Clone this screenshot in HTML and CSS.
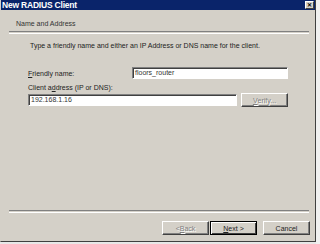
FILE: index.html
```html
<!DOCTYPE html>
<html lang="en">
<head>
    <meta charset="UTF-8">
    <title>New RADIUS Client</title>
    <link rel="stylesheet" href="styles.css">
</head>
<body>
    <div class="window">
        <div class="titlebar">
            <span class="title">New RADIUS Client</span>
            <span class="close">&#x2715;</span>
        </div>
        <div class="header">
            <div class="heading">Name and Address</div>
        </div>
        <div class="rule"></div>
        <div class="content">
            <p class="intro">Type a friendly name and either an IP Address or DNS name for the client.</p>
            <div class="row">
                <label class="label"><u>F</u>riendly name:</label>
                <div class="field name-field">floors_router</div>
            </div>
            <label class="label addr-label">Client a<u>d</u>dress (IP or DNS):</label>
            <div class="row">
                <div class="field addr-field">192.168.1.16</div>
                <div class="btn verify"><u>V</u>erify...</div>
            </div>
        </div>
        <div class="rule"></div>
        <div class="buttons">
            <div class="btn disabled">&lt; <u>B</u>ack</div>
            <div class="btn default"><u>N</u>ext &gt;</div>
            <div class="btn cancel">Cancel</div>
        </div>
    </div>
    <div class="behind"></div>
</body>
</html>
```

FILE: styles.css
```css
body {
    margin: 0;
    width: 320px;
    height: 244px;
    overflow: hidden;
    background: #e8e8e8;
    display: flex;
    font-family: "Liberation Sans", Arial, sans-serif;
    font-size: 7px;
    color: #000;
}
.window {
    width: 314px;
    height: 241px;
    background: #d4d0c8;
    border: 1px solid #404040;
    border-top: none;
    border-left-color: #d4d0c8;
    display: flex;
    flex-direction: column;
}
.behind {
    flex: 1;
    background: #f0f0f0;
}
.titlebar {
    height: 10px;
    background: #0a246a;
    display: flex;
    align-items: center;
    justify-content: space-between;
    padding: 0 1px 0 1px;
}
.title {
    color: #fff;
    font-weight: bold;
    font-size: 8.5px;
    letter-spacing: -0.2px;
}
.close {
    width: 9px;
    height: 8px;
    background: #d4d0c8;
    border: 1px solid;
    border-color: #fff #404040 #404040 #fff;
    box-sizing: border-box;
    font-size: 6px;
    line-height: 6px;
    text-align: center;
    color: #000;
    font-weight: bold;
}
.header {
    height: 21px;
    padding: 0 0 0 15px;
    display: flex;
    align-items: center;
}
.heading {
    color: #333;
    margin-top: 6px;
}
.rule {
    margin: 0 6px 0 8px;
    height: 1px;
    border-top: 1px solid #808080;
    border-bottom: 1px solid #fff;
}
.content {
    flex: 1;
    padding: 8px 27px 0 27px;
    display: flex;
    flex-direction: column;
}
.intro {
    margin: 0 0 18px 2px;
    color: #222;
}
.row {
    display: flex;
    align-items: center;
    justify-content: space-between;
}
.label {
    color: #222;
}
.addr-label {
    margin: 5px 0 2px 0;
}
.field {
    height: 12px;
    background: #fff;
    border: 1px solid;
    border-color: #808080 #fff #fff #808080;
    box-shadow: inset 1px 1px 0 #404040;
    box-sizing: border-box;
    padding: 0 2px;
    line-height: 10px;
    color: #333;
}
.name-field {
    width: 156px;
}
.addr-field {
    width: 209px;
}
.btn {
    height: 14px;
    background: #d4d0c8;
    border: 1px solid;
    border-color: #fff #404040 #404040 #fff;
    box-shadow: inset -1px -1px 0 #808080;
    box-sizing: border-box;
    display: flex;
    align-items: center;
    justify-content: center;
    color: #222;
}
.verify {
    width: 47px;
    color: #808080;
    text-shadow: 1px 1px 0 #fff;
}
.buttons {
    height: 28px;
    display: flex;
    align-items: flex-start;
    justify-content: flex-end;
    padding: 8px 5px 0 0;
    box-sizing: border-box;
}
.buttons .btn {
    width: 47px;
}
.disabled {
    color: #808080;
    text-shadow: 1px 1px 0 #fff;
}
.default {
    border-color: #000;
    box-shadow: inset 1px 1px 0 #fff, inset -1px -1px 0 #404040;
    margin-left: 1px;
}
.cancel {
    margin-left: 6px;
}
```
